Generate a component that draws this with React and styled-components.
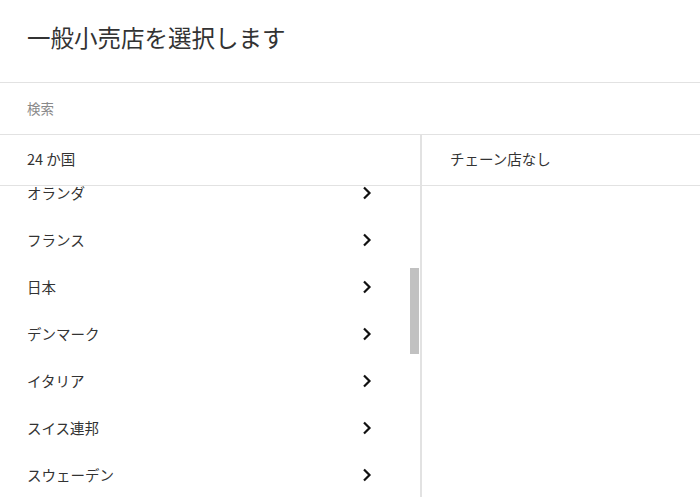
import { useEffect, useRef, useState } from 'react';
import styled, { createGlobalStyle } from 'styled-components';

const GlobalStyle = createGlobalStyle`
  html, body {
    margin: 0;
    padding: 0;
    background: #fff;
  }
  body {
    font-family: "Noto Sans CJK JP", "Noto Sans", sans-serif;
    color: #333;
  }
`;

const countries = [
  'アメリカ合衆国',
  'イギリス',
  'カナダ',
  'ドイツ',
  'オーストラリア',
  'スペイン',
  'オランダ',
  'フランス',
  '日本',
  'デンマーク',
  'イタリア',
  'スイス連邦',
  'スウェーデン',
  'ベルギー',
  'オーストリア',
  'ノルウェー',
  'フィンランド',
  'アイルランド',
  'ポーランド',
  'ポルトガル',
  'ニュージーランド',
  'シンガポール',
  '香港',
  '韓国',
];

function Chevron() {
  return (
    <svg width="10" height="14" viewBox="0 0 10 14">
      <path d="M2 1.5 L7.5 7 L2 12.5" fill="none" stroke="#111" strokeWidth="2.2" />
    </svg>
  );
}

function App() {
  const listRef = useRef(null);
  const [thumb, setThumb] = useState({ top: 0, height: 0 });

  const measure = () => {
    const el = listRef.current;
    if (!el) return;
    const ratio = el.clientHeight / el.scrollHeight;
    setThumb({ top: el.scrollTop * ratio, height: el.clientHeight * ratio });
  };

  useEffect(() => {
    if (listRef.current) listRef.current.scrollTop = 299;
    measure();
  }, []);

  return (
    <>
      <GlobalStyle />
      <Dialog>
        <Header>一般小売店を選択します</Header>
        <SearchRow>
          <SearchInput placeholder="検索" />
        </SearchRow>
        <Columns>
          <LeftColumn>
            <ColumnHead>24 か国</ColumnHead>
            <ListFrame>
              <List ref={listRef} onScroll={measure}>
                {countries.map((name) => (
                  <Item key={name}>
                    <span>{name}</span>
                    <Chevron />
                  </Item>
                ))}
              </List>
              <Thumb style={{ top: thumb.top, height: thumb.height }} />
            </ListFrame>
          </LeftColumn>
          <RightColumn>
            <ColumnHead $indent>チェーン店なし</ColumnHead>
          </RightColumn>
        </Columns>
      </Dialog>
    </>
  );
}

const Dialog = styled.div`
  display: flex;
  flex-direction: column;
  height: 497px;
  width: 700px;
  overflow: hidden;
`;

const Header = styled.div`
  height: 83px;
  box-sizing: border-box;
  padding: 20px 27px 0;
  font-size: 23.5px;
  line-height: 34px;
  color: #333;
  border-bottom: 1px solid #e2e2e2;
  flex-shrink: 0;
`;

const SearchRow = styled.div`
  height: 52px;
  box-sizing: border-box;
  border-bottom: 1px solid #e2e2e2;
  display: flex;
  align-items: center;
  flex-shrink: 0;
`;

const SearchInput = styled.input`
  border: none;
  outline: none;
  background: transparent;
  width: 100%;
  padding: 0 27px;
  margin-top: -2px;
  font-family: "Noto Sans CJK JP", "Noto Sans", sans-serif;
  font-size: 13.5px;
  color: #333;
  &::placeholder {
    color: #8a8a8a;
  }
`;

const Columns = styled.div`
  flex: 1;
  display: flex;
  min-height: 0;
`;

const LeftColumn = styled.div`
  width: 420px;
  border-right: 2px solid #e2e2e2;
  display: flex;
  flex-direction: column;
  min-height: 0;
`;

const RightColumn = styled.div`
  flex: 1;
  display: flex;
  flex-direction: column;
`;

const ColumnHead = styled.div`
  height: 51px;
  box-sizing: border-box;
  padding: 0 ${(p) => (p.$indent ? '28px' : '27px')} 3px;
  display: flex;
  align-items: center;
  font-size: 14.5px;
  color: #333;
  border-bottom: 1px solid #e2e2e2;
  flex-shrink: 0;
`;

const ListFrame = styled.div`
  position: relative;
  flex: 1;
  min-height: 0;
  display: flex;
`;

const List = styled.div`
  flex: 1;
  overflow-y: auto;
  scrollbar-width: none;
  &::-webkit-scrollbar {
    display: none;
  }
`;

const Thumb = styled.div`
  position: absolute;
  right: 1px;
  width: 9px;
  background: #c1c1c1;
`;

const Item = styled.div`
  height: 47px;
  display: flex;
  align-items: center;
  justify-content: space-between;
  padding: 0 48px 0 27px;
  font-size: 14.5px;
  color: #333;
`;

export default App;
